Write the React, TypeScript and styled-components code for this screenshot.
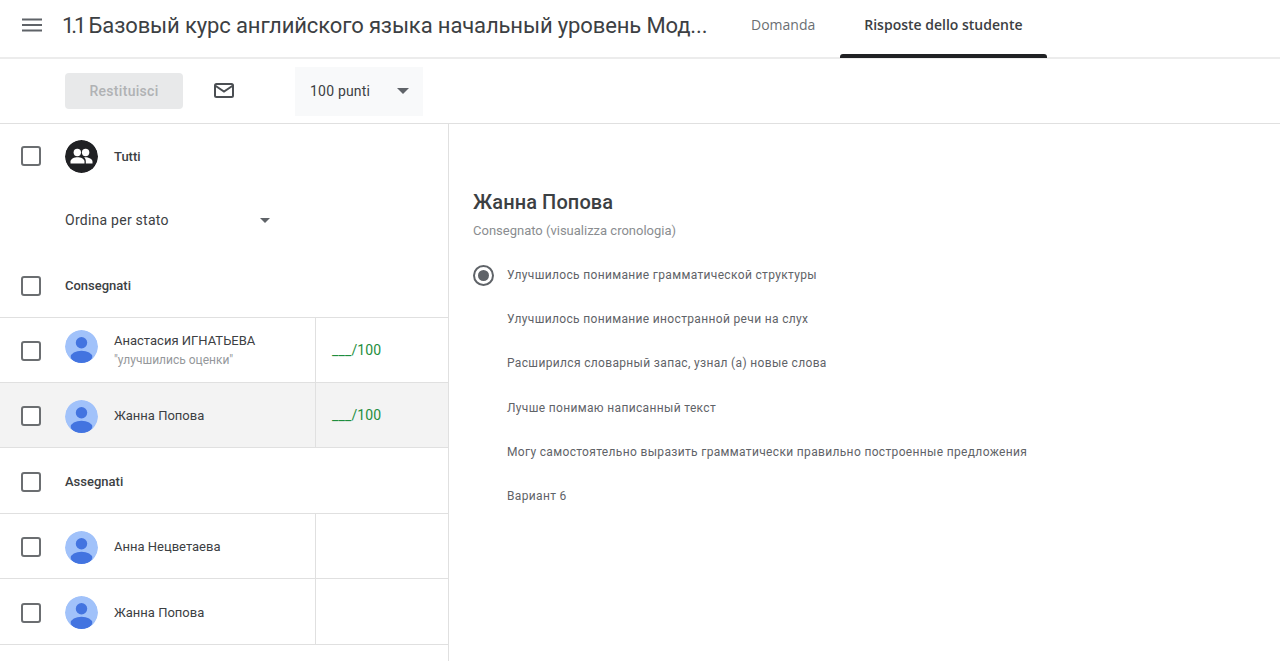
import styled, { createGlobalStyle } from "styled-components";

const GlobalStyle = createGlobalStyle`
  html, body {
    margin: 0;
    padding: 0;
    background: #fff;
    font-family: Roboto, "Liberation Sans", sans-serif;
    color: #3c4043;
  }
`;

const Page = styled.div`
  width: 1280px;
  height: 661px;
  overflow: hidden;
  display: flex;
  flex-direction: column;
`;

const Header = styled.header`
  height: 59px;
  flex: none;
  display: flex;
  align-items: stretch;
  box-sizing: border-box;
  border-bottom: 2px solid #ececec;
`;

const MenuButton = styled.div`
  width: 62px;
  flex: none;
  display: flex;
  align-items: center;
  padding: 0 0 7px 22px;
  box-sizing: border-box;
  color: #5f6368;
`;

const Title = styled.h1`
  width: 645px;
  flex: none;
  margin: 0;
  padding-top: 12px;
  box-sizing: border-box;
  font-size: 22px;
  line-height: 28px;
  font-weight: 400;
  letter-spacing: -0.12px;
  white-space: nowrap;
  color: #3c4043;
`;

const TitleNumber = styled.span`
  letter-spacing: -3.1px;
`;

const Tabs = styled.nav`
  display: flex;
  margin-left: 19.5px;
`;

const Tab = styled.div<{ $active?: boolean }>`
  position: relative;
  padding: 0 24.5px 9px;
  display: flex;
  align-items: center;
  font-family: "Open Sans", Roboto, sans-serif;
  font-size: 14px;
  font-weight: ${(p) => (p.$active ? 600 : 500)};
  color: ${(p) => (p.$active ? "#3c4043" : "#6b6f73")};
  white-space: nowrap;

  &::after {
    content: "";
    display: ${(p) => (p.$active ? "block" : "none")};
    position: absolute;
    left: 0;
    right: 0;
    bottom: -1px;
    height: 4px;
    border-radius: 3px 3px 0 0;
    background: #202124;
  }
`;

const Toolbar = styled.div`
  height: 65px;
  flex: none;
  display: flex;
  align-items: center;
  padding-left: 65px;
  border-bottom: 1px solid #e0e0e0;
  box-sizing: border-box;
`;

const ReturnButton = styled.div`
  width: 118px;
  height: 36px;
  display: flex;
  align-items: center;
  justify-content: center;
  background: #e8e9ea;
  border-radius: 4px;
  font-size: 14px;
  font-weight: 500;
  letter-spacing: 0.3px;
  color: #b0b2b4;
`;

const MailButton = styled.div`
  width: 24px;
  height: 24px;
  margin: 0 59px 0 29px;
  color: #4b4f53;
`;

const PointsSelect = styled.div`
  width: 128px;
  height: 49px;
  display: flex;
  align-items: center;
  justify-content: space-between;
  padding: 0 14px 0 15px;
  box-sizing: border-box;
  background: #f8f9fa;
  font-size: 14px;
  letter-spacing: 0.2px;
  color: #3c4043;
`;

const Caret = styled.span`
  width: 0;
  height: 0;
  border-left: 6px solid transparent;
  border-right: 6px solid transparent;
  border-top: 6px solid #5f6368;
`;

const Body = styled.div`
  flex: 1;
  display: flex;
  min-height: 0;
`;

const Sidebar = styled.aside`
  width: 449px;
  flex: none;
  box-sizing: border-box;
  border-right: 1px solid #e0e0e0;
`;

const AllRow = styled.div`
  height: 64px;
  display: flex;
  align-items: center;
  padding-left: 21px;
`;

const SortRow = styled.div`
  height: 64px;
  display: flex;
  align-items: center;
  padding-left: 65px;
  font-size: 14px;
  letter-spacing: 0.25px;
  color: #3c4043;
`;

const SortCaret = styled(Caret)`
  margin-left: 91px;
  border-left-width: 5px;
  border-right-width: 5px;
  border-top-width: 5px;
`;

const GroupRow = styled.div`
  height: 66px;
  display: flex;
  align-items: center;
  padding: 2px 0 0 21px;
  box-sizing: border-box;
  border-bottom: 1px solid #e0e0e0;
  font-size: 13px;
  font-weight: 500;
  color: #3c4043;
`;

const StudentRow = styled.div<{ $selected?: boolean; $tall?: boolean }>`
  height: ${(p) => (p.$tall ? "66px" : "65px")};
  display: flex;
  box-sizing: border-box;
  border-bottom: 1px solid #e0e0e0;
  background: ${(p) => (p.$selected ? "#f3f3f3" : "#fff")};
`;

const StudentMain = styled.div`
  width: 316px;
  flex: none;
  display: flex;
  align-items: center;
  padding: 2px 0 0 21px;
  box-sizing: border-box;
  border-right: 1px solid #e0e0e0;
`;

const Checkbox = styled.span`
  width: 20px;
  height: 20px;
  flex: none;
  box-sizing: border-box;
  border: 2px solid #6b6e71;
  border-radius: 3px;
  background: #fff;
  margin-right: 24px;
`;

const Avatar = styled.svg<{ $raised?: boolean }>`
  width: 33px;
  height: 33px;
  flex: none;
  margin-right: 16px;
  margin-bottom: ${(p) => (p.$raised ? "9px" : "0")};
  border-radius: 50%;
`;

const AllLabel = styled.span`
  font-size: 13px;
  font-weight: 500;
  color: #3c4043;
`;

const StudentText = styled.div`
  margin-bottom: 2px;
`;

const StudentName = styled.div`
  font-size: 13px;
  line-height: 16px;
  color: #3c4043;
`;

const StudentNote = styled.div`
  font-size: 12px;
  line-height: 15px;
  margin-top: 4px;
  color: #95989b;
`;

const Grade = styled.div`
  flex: 1;
  display: flex;
  align-items: center;
  padding-left: 16px;
  font-size: 14px;
  letter-spacing: 0.15px;
  color: #1e8e3e;
`;

const Answer = styled.main`
  flex: 1;
  padding: 64px 0 0 24px;
`;

const AnswerName = styled.h2`
  margin: 0;
  font-size: 20px;
  line-height: 28px;
  font-weight: 500;
  letter-spacing: 0.1px;
  color: #3c4043;
`;

const AnswerStatus = styled.div`
  font-size: 13px;
  line-height: 16px;
  margin-top: 7px;
  color: #8a8d90;
`;

const Options = styled.div`
  margin-top: 14px;
`;

const Option = styled.div`
  height: 44.2px;
  display: flex;
  align-items: center;
  font-size: 12px;
  letter-spacing: 0.34px;
  color: #5f6368;
`;

const RadioSlot = styled.span`
  width: 34px;
  flex: none;
`;

const Radio = styled.span`
  width: 21px;
  height: 21px;
  box-sizing: border-box;
  display: flex;
  align-items: center;
  justify-content: center;
  border: 2px solid #5f6368;
  border-radius: 50%;
  &::after {
    content: "";
    width: 11px;
    height: 11px;
    border-radius: 50%;
    background: #5f6368;
  }
`;

const PersonAvatar = ({ raised }: { raised?: boolean }) => (
  <Avatar viewBox="0 0 33 33" $raised={raised}>
    <circle cx="16.5" cy="16.5" r="16.5" fill="#a1c2fa" />
    <circle cx="16.5" cy="12.8" r="5.7" fill="#4374e0" />
    <ellipse cx="16.5" cy="27" rx="10.8" ry="6.3" fill="#4374e0" />
  </Avatar>
);

const GroupAvatar = () => (
  <Avatar viewBox="0 0 33 33">
    <circle cx="16.5" cy="16.5" r="16.5" fill="#202124" />
    <circle cx="12.3" cy="12.5" r="3.7" fill="#fff" />
    <circle cx="20.6" cy="12.5" r="3.7" fill="#fff" />
    <path d="M5.5 23.5v-2c0-2.8 4-4.3 7-4.3s7 1.5 7 4.3v2z" fill="#fff" />
    <path d="M20.8 23.5h6.7v-2c0-2.7-4-4.3-7-4.3-.5 0-1 .05-1.5.1 1.2.9 1.8 2.3 1.8 4.2z" fill="#fff" />
  </Avatar>
);

const options = [
  "Улучшилось понимание грамматической структуры",
  "Улучшилось понимание иностранной речи на слух",
  "Расширился словарный запас, узнал (а) новые слова",
  "Лучше понимаю написанный текст",
  "Могу самостоятельно выразить грамматически правильно построенные предложения",
  "Вариант 6",
];

function App() {
  return (
    <>
      <GlobalStyle />
      <Page>
        <Header>
          <MenuButton>
            <svg width="20" height="16" viewBox="0 0 20 16">
              <path d="M0 1.5h20v2H0zM0 7h20v2H0zM0 12.5h20v2H0z" fill="currentColor" />
            </svg>
          </MenuButton>
          <Title>
            <TitleNumber>1.1</TitleNumber> Базовый курс английского языка начальный уровень Мод...
          </Title>
          <Tabs>
            <Tab>Domanda</Tab>
            <Tab $active>Risposte dello studente</Tab>
          </Tabs>
        </Header>
        <Toolbar>
          <ReturnButton>Restituisci</ReturnButton>
          <MailButton>
            <svg width="24" height="24" viewBox="0 0 24 24" fill="none" stroke="currentColor" strokeWidth="2">
              <rect x="3" y="5" width="18" height="13" rx="1.5" />
              <path d="M3 6.5l9 6 9-6" />
            </svg>
          </MailButton>
          <PointsSelect>
            100 punti
            <Caret />
          </PointsSelect>
        </Toolbar>
        <Body>
          <Sidebar>
            <AllRow>
              <Checkbox />
              <GroupAvatar />
              <AllLabel>Tutti</AllLabel>
            </AllRow>
            <SortRow>
              Ordina per stato
              <SortCaret />
            </SortRow>
            <GroupRow>
              <Checkbox />
              Consegnati
            </GroupRow>
            <StudentRow>
              <StudentMain>
                <Checkbox />
                <PersonAvatar raised />
                <StudentText>
                  <StudentName>Анастасия ИГНАТЬЕВА</StudentName>
                  <StudentNote>"улучшились оценки"</StudentNote>
                </StudentText>
              </StudentMain>
              <Grade>___/100</Grade>
            </StudentRow>
            <StudentRow $selected>
              <StudentMain>
                <Checkbox />
                <PersonAvatar />
                <StudentName>Жанна Попова</StudentName>
              </StudentMain>
              <Grade>___/100</Grade>
            </StudentRow>
            <GroupRow>
              <Checkbox />
              Assegnati
            </GroupRow>
            <StudentRow>
              <StudentMain>
                <Checkbox />
                <PersonAvatar />
                <StudentName>Анна Нецветаева</StudentName>
              </StudentMain>
            </StudentRow>
            <StudentRow $tall>
              <StudentMain>
                <Checkbox />
                <PersonAvatar />
                <StudentName>Жанна Попова</StudentName>
              </StudentMain>
            </StudentRow>
          </Sidebar>
          <Answer>
            <AnswerName>Жанна Попова</AnswerName>
            <AnswerStatus>Consegnato (visualizza cronologia)</AnswerStatus>
            <Options>
              {options.map((text, i) => (
                <Option key={text}>
                  <RadioSlot>{i === 0 && <Radio />}</RadioSlot>
                  {text}
                </Option>
              ))}
            </Options>
          </Answer>
        </Body>
      </Page>
    </>
  );
}

export default App;
